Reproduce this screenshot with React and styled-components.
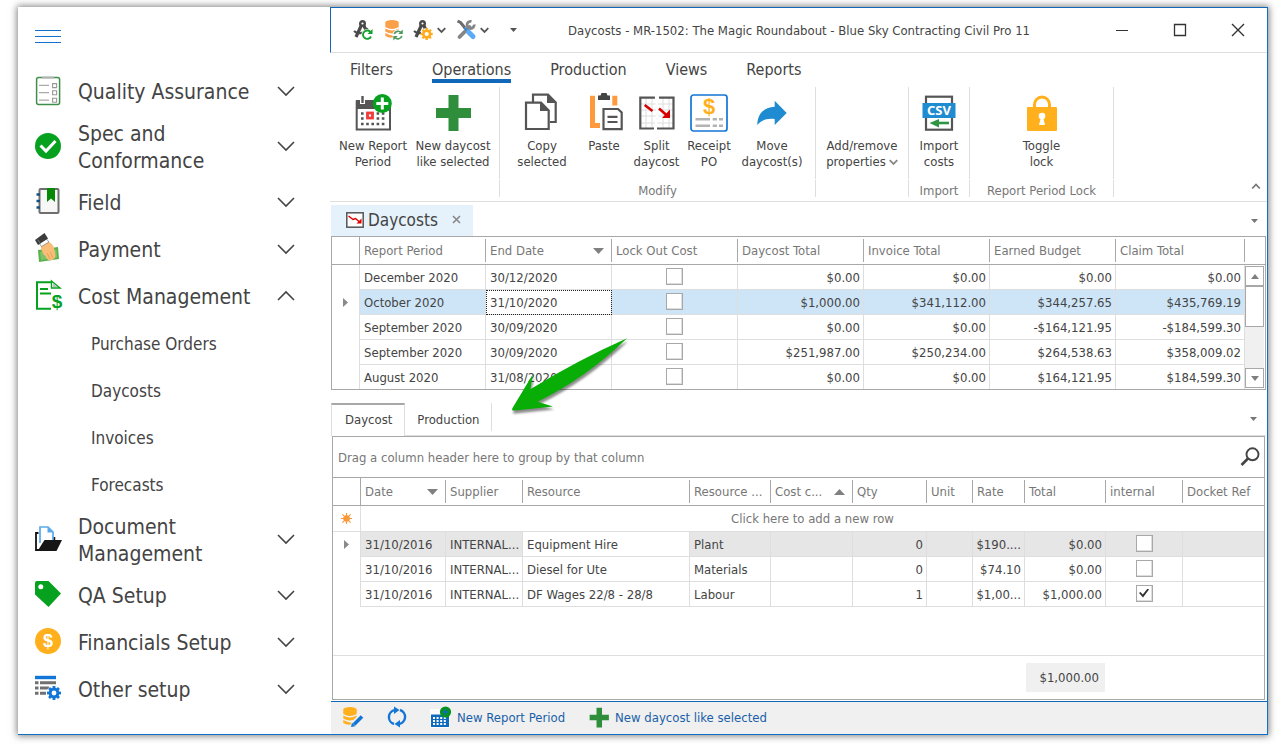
import React from 'react';
import styled, { createGlobalStyle, css } from 'styled-components';

const periods = [
  ['December 2020', '30/12/2020', '$0.00', '$0.00', '$0.00', '$0.00'],
  ['October 2020', '31/10/2020', '$1,000.00', '$341,112.00', '$344,257.65', '$435,769.19'],
  ['September 2020', '30/09/2020', '$0.00', '$0.00', '-$164,121.95', '-$184,599.30'],
  ['September 2020', '30/09/2020', '$251,987.00', '$250,234.00', '$264,538.63', '$358,009.02'],
  ['August 2020', '31/08/2020', '$0.00', '$0.00', '$164,121.95', '$184,599.30'],
];

const costs = [
  { resource: 'Equipment Hire', type: 'Plant', qty: 0, rate: '$190....', total: '$0.00' },
  { resource: 'Diesel for Ute', type: 'Materials', qty: 0, rate: '$74.10', total: '$0.00' },
  { resource: 'DF Wages 22/8 - 28/8', type: 'Labour', qty: 1, rate: '$1,00...', total: '$1,000.00', internal: true },
];

/* ---------- small marks ---------- */

const Chevron = ({ up }) => (
  <svg width="18" height="12" viewBox="0 0 18 12" fill="none" stroke="#444" strokeWidth="1.6">
    <path d={up ? 'M1 10 L9 2 L17 10' : 'M1 2 L9 10 L17 2'} />
  </svg>
);

const SmallChevron = ({ up, color = '#555', size = 9 }) => (
  <svg width={size} height="7" viewBox="0 0 9 7" fill="none" stroke={color} strokeWidth="1.8">
    <path d={up ? 'M.7 5.5 L4.5 1.5 L8.3 5.5' : 'M.7 1.2 L4.5 5 L8.3 1.2'} />
  </svg>
);

const Triangle = ({ up, w = 11, h = 6, color = '#808080' }) => (
  <svg width={w} height={h} viewBox="0 0 10 6" preserveAspectRatio="none" fill={color}>
    <path d={up ? 'M0 6 L5 0 L10 6Z' : 'M0 0 H10 L5 6Z'} />
  </svg>
);

const RowPointer = () => (
  <svg width="5" height="9" viewBox="0 0 5 9" fill="#8a8a8a"><path d="M0 0 L5 4.5 L0 9Z" /></svg>
);

/* ---------- sidebar icons ---------- */

const NavSvg = ({ children }) => <svg width="28" height="30" viewBox="0 0 28 30" fill="none">{children}</svg>;

const ChecklistIcon = () => (
  <NavSvg>
    <rect x="2.6" y="1.6" width="23" height="27" rx="2" fill="#fff" stroke="#3f8f4b" strokeWidth="1.5" />
    <path d="M8 1.6 H20" stroke="#b5b5b5" strokeWidth="2" />
    <path d="M5 9.4 H15 M5 16.6 H15 M5 24.2 H15" stroke="#aaa" strokeWidth="1.3" />
    <path d="M18.6 7.6h4v4h-4z M18.6 14.8h4v4h-4z M18.6 22.2h4v4h-4z" stroke="#999" strokeWidth="1.1" />
  </NavSvg>
);

const ApprovedIcon = () => (
  <NavSvg>
    <circle cx="14" cy="15" r="13" fill="#06a11f" />
    <path d="M6.5 14.5 L12 20 L21.5 10" stroke="#fff" strokeWidth="3" />
  </NavSvg>
);

const NotebookIcon = () => (
  <NavSvg>
    <rect x="5.5" y="2" width="19" height="24" rx="1" fill="#f7f7f7" stroke="#6f6f6f" strokeWidth="2" />
    <path d="M2.5 7.5 H6 M2.5 14 H6 M2.5 20.5 H6" stroke="#16507e" strokeWidth="2.6" />
    <path d="M13 1 H21 V15 L17 11.5 L13 15Z" fill="#068a06" />
  </NavSvg>
);

const PaymentIcon = () => (
  <NavSvg>
    <path d="M4 16 L24 13 L25 25 L5 28Z" fill="#5cb04c" />
    <path d="M6 18 L22.5 15.5 L23 23.5 L7 26Z" fill="#7cc46a" />
    <path d="M7 11 L14 7.5 C18 9 20 12 20.5 16 C21.5 20 22 24 20 24.6 C19 26.5 17 26.5 16.5 25.8 C14.5 27 12.5 25 11.5 22 C8.5 20 6.5 15 7 11Z" fill="#f9bd77" />
    <path d="M13 19 L16 25 M16 18 L19 24" stroke="#e09c50" strokeWidth=".8" />
    <path d="M5 9 L12.5 5 L15 8 L7.5 12.5Z" fill="#fff" stroke="#777" strokeWidth=".7" />
    <path d="M1 6 L10.5 -1 L14 4.5 L4 11Z" fill="#3c3c3c" />
    <path d="M3.5 5.6 L6.5 9.5" stroke="#777" />
  </NavSvg>
);

const CostIcon = () => (
  <NavSvg>
    <path d="M17 1.2 H3 V27.8 H17" stroke="#06a11f" strokeWidth="2" />
    <path d="M17.5 0 L26 7 H17.5Z" fill="#fff" stroke="#06a11f" strokeWidth="1.4" />
    <path d="M19 2.5 L23.5 6 H19Z" fill="#bbb" />
    <path d="M6 8 H14 M6 12.5 H17" stroke="#06a11f" strokeWidth="1.8" />
    <text x="23" y="27" textAnchor="middle" fontFamily="Liberation Sans" fontSize="19" fontWeight="700" fill="#06a11f">$</text>
  </NavSvg>
);

const FolderIcon = () => (
  <NavSvg>
    <path d="M4.5 9 H2 V26 H5" stroke="#111" strokeWidth="1.8" />
    <path d="M6 19 V3 H14 L19 8 V16" stroke="#58a9ec" strokeWidth="1.7" />
    <path d="M13.5 3 V8.5 H19" fill="#58a9ec" />
    <path d="M10.5 16 H28 L22.5 27 H3.5Z" fill="#161616" />
    <path d="M20.5 13 V16.5" stroke="#161616" strokeWidth="1.5" />
  </NavSvg>
);

const TagIcon = () => (
  <NavSvg>
    <path d="M3 1 H14.5 L27 13.5 L14.5 27 L1 14.5 V3 Q1 1 3 1Z" fill="#06a11f" />
    <circle cx="6.8" cy="6.8" r="2.5" fill="#fff" />
  </NavSvg>
);

const CoinIcon = () => (
  <NavSvg>
    <circle cx="14" cy="14" r="13" fill="#ffb01c" />
    <text x="14" y="20" textAnchor="middle" fontFamily="Liberation Sans" fontSize="18" fontWeight="700" fill="#fff">$</text>
  </NavSvg>
);

const Gear = ({ x, y, r, color }) => (
  <g transform={`translate(${x} ${y})`}>
    {[0, 45, 90, 135].map((a) => (
      <rect key={a} x={-r * 0.2} y={-r} width={r * 0.4} height={r * 2} fill={color} transform={`rotate(${a})`} />
    ))}
    <circle r={r * 0.56} fill="none" stroke={color} strokeWidth={r * 0.42} />
    <circle r={r * 0.35} fill="#fff" />
  </g>
);

const SetupIcon = () => (
  <NavSvg>
    <path d="M1 3.5 H22" stroke="#1376d6" strokeWidth="3.4" />
    <path d="M1 8.7 H4.5 M6 8.7 H22 M1 14 H4.5 M6 14 H15 M1 19.3 H4.5 M6 19.3 H12" stroke="#707070" strokeWidth="3" />
    <circle cx="20" cy="19" r="7.5" fill="#fff" />
    <Gear x={20} y={19} r={7} color="#1376d6" />
  </NavSvg>
);

/* ---------- title bar icons ---------- */

const QuickSvg = ({ children }) => <svg width="20" height="22" viewBox="1 0 20 22" fill="none">{children}</svg>;

const Compass = () => (
  <>
    <circle cx="10.5" cy="4.5" r="2.3" stroke="#4a4a4a" strokeWidth="2.4" />
    <path d="M9.5 6 L4 18 M11.5 6 L17 17" stroke="#4a4a4a" strokeWidth="3.2" />
    <path d="M2 12 C6 15.5 12 15 16 9.5" stroke="#4a4a4a" strokeWidth="2.2" />
  </>
);

const CompassRefresh = () => (
  <QuickSvg>
    <Compass />
    <circle cx="15" cy="15.5" r="5.6" fill="#fff" />
    <path d="M18.8 13.5 A4.2 4.2 0 1 0 19 17.5" stroke="#14a02c" strokeWidth="1.9" />
    <path d="M20.5 10 V15 H15.5Z" fill="#14a02c" />
  </QuickSvg>
);

const Cylinder = ({ color }) => (
  <g>
    <ellipse cx="8" cy="3.6" rx="6.7" ry="2.6" fill={color} />
    <path d="M1.3 4 H14.7 V8 Q8 12 1.3 8Z M1.3 9.5 Q8 13.5 14.7 9.5 V12.5 Q8 16.5 1.3 12.5Z M1.3 14 Q8 18 12 15.5 V17.5 Q6 20 1.3 17Z" fill={color} />
  </g>
);

const DataRefresh = () => (
  <QuickSvg>
    <g transform="translate(2 0)">
      <Cylinder color="#f9a049" />
      <circle cx="14" cy="16" r="5.5" fill="#fff" />
      <path d="M10.3 15 A4 4 0 0 1 17 13.5 M17.8 17 A4 4 0 0 1 11 18.5" stroke="#4b9b60" strokeWidth="1.7" />
      <path d="M18.8 10.5 V15 H14.3Z M9.3 21.5 V17 H13.8Z" fill="#4b9b60" />
    </g>
  </QuickSvg>
);

const CompassGear = () => (
  <QuickSvg>
    <Compass />
    <circle cx="14.7" cy="15" r="6" fill="#fff" />
    <Gear x={14.7} y={15} r={6} color="#ffac1c" />
  </QuickSvg>
);

const ToolsIcon = () => (
  <QuickSvg>
    <path d="M4.5 18 L14.5 8" stroke="#858585" strokeWidth="3.8" strokeLinecap="round" />
    <path d="M16.5 2.4 A3.6 3.6 0 1 0 19.2 5.5" stroke="#858585" strokeWidth="2.8" />
    <path d="M2.5 2 L5.5 3.5 L10 9" stroke="#6c6c6c" strokeWidth="3" />
    <path d="M9 8.5 L13 12.5" stroke="#2f86d6" strokeWidth="2" />
    <path d="M13.5 13 L18 17.5" stroke="#5aaaf5" strokeWidth="5" strokeLinecap="round" />
  </QuickSvg>
);

/* ---------- ribbon icons ---------- */

const BigSvg = ({ children }) => <svg width="40" height="40" viewBox="0 0 40 40" fill="none">{children}</svg>;

const NewPeriodIcon = () => (
  <BigSvg>
    <rect x="3.7" y="9.5" width="33.3" height="28" fill="#fff" stroke="#555" strokeWidth="2" />
    <path d="M3 8 H37 V17 H3Z" fill="#555" />
    <path d="M9.5 3.5 V12" stroke="#fff" strokeWidth="5" />
    <path d="M9.5 4 V11" stroke="#555" strokeWidth="2.4" />
    <path d="M8 21.5 H34 M8 26.5 H34 M8 32 H34" stroke="#555" strokeWidth="2.6" strokeDasharray="2.6 2.6" />
    <rect x="12" y="18.5" width="10" height="10" fill="#fff" />
    <rect x="14.5" y="21" width="5" height="5" stroke="#f13a3a" strokeWidth="2.8" />
    <circle cx="29.3" cy="11.5" r="9.5" fill="#06a11f" />
    <path d="M29.3 5.5 V17.5 M23.3 11.5 H35.3" stroke="#fff" strokeWidth="3" />
  </BigSvg>
);

const PlusIcon = ({ size = 40 }) => (
  <svg width={size} height={size} viewBox="0 0 40 40"><path d="M15.5 3 H25.5 V16 H38 V26 H25.5 V39 H15.5 V26 H3 V16 H15.5Z" fill="#2f8e3b" /></svg>
);

const CopyIcon = () => (
  <BigSvg>
    <path d="M11 10 V2.7 H26 L33.7 10.5 V30 H28" stroke="#555" strokeWidth="2.2" />
    <path d="M25 2 V11 H34Z" fill="#555" />
    <path d="M4 10.7 H19 L26.7 18.5 V37 H4Z" fill="#fff" stroke="#555" strokeWidth="2.2" />
    <path d="M18 10 V19 H27Z" fill="#555" />
  </BigSvg>
);

const PasteIcon = () => (
  <BigSvg>
    <path d="M6 3.7 H11 V31 H16 V36 H6Z M28.3 3.7 H33.3 V13.5 H28.3Z" fill="#ff9a3c" />
    <path d="M14 8 V3.5 H16.5 L17.5 1 H22.5 L23.5 3.5 H26 V8Z" fill="#444" />
    <path d="M19.5 17 H34 L37.7 20.5 V37.2 H19.5Z" fill="#fff" stroke="#555" strokeWidth="2.2" />
    <path d="M23.5 24.8 H33.5 M23.5 30 H33.5" stroke="#555" strokeWidth="2.2" />
  </BigSvg>
);

const SplitIcon = () => (
  <BigSvg>
    <path d="M9 5 V37 M15 5 V37 M26 5 V37 M32 5 V37 M3 12 H37 M3 18 H37 M3 24 H37 M3 31 H37" stroke="#ddd" />
    <path d="M18 5.7 H3.3 V36.5 H17 M22 5.7 H36.5 V36.5 H20" stroke="#555" strokeWidth="2.2" />
    <path d="M19 3 L20.5 20 L18 39" stroke="#fff" strokeWidth="2.6" />
    <path d="M7.7 13 L15.5 19 M22 16.5 L30 23.5" stroke="#d60000" strokeWidth="2.6" />
    <path d="M33 17.5 V26 H25Z" fill="#d60000" />
  </BigSvg>
);

const ReceiptIcon = () => (
  <BigSvg>
    <rect x="2" y="3" width="36" height="36" rx="2.5" fill="#fff" stroke="#1376d6" strokeWidth="1.7" />
    <text x="20" y="22" textAnchor="middle" fontFamily="Liberation Sans" fontSize="22" fontWeight="700" fill="#ffb01c">$</text>
    <path d="M6.5 27.3 H21 M23.7 27.3 H28 M30 27.3 H34 M6.5 33.7 H21 M23.7 33.7 H28 M30 33.7 H34" stroke="#b3b3b3" strokeWidth="2.6" />
  </BigSvg>
);

const MoveIcon = () => (
  <BigSvg>
    <path d="M5.3 33 C5.5 22 12 15 22.7 14.7 V8.7 L34.7 21 L22.7 33 V27 C15 26 9.5 28 5.3 33Z" fill="#1f8bd0" />
  </BigSvg>
);

const CsvIcon = () => (
  <BigSvg>
    <rect x="7" y="4.7" width="26" height="33" fill="#fff" stroke="#555" strokeWidth="2.2" />
    <rect x="3.5" y="11" width="33" height="15" fill="#1f8bd0" />
    <text x="20" y="23" textAnchor="middle" fontFamily="Noto Sans" fontSize="13" fontWeight="700" fill="#fff">CSV</text>
    <path d="M18 31 H30" stroke="#2f9444" strokeWidth="2.6" />
    <path d="M10.5 31 L20 27 V35.5Z" fill="#2f9444" />
  </BigSvg>
);

const LockIcon = () => (
  <svg width="40" height="40" viewBox="1 0 40 40" fill="none">
    <path d="M13.5 16 V12.5 A7.5 7.5 0 0 1 28.5 12.5 V16" stroke="#ffb01c" strokeWidth="3" />
    <rect x="6" y="15" width="30" height="24" rx="1" fill="#ffb01c" />
    <circle cx="21" cy="24" r="3.3" fill="#fff" />
    <path d="M20 25 H22 L24 33 H18Z" fill="#fff" />
  </svg>
);

/* ---------- other icons ---------- */

const ChartIcon = () => (
  <svg width="18" height="16" viewBox="0 0 18 16" fill="none">
    <rect x=".8" y=".8" width="16.4" height="14.4" fill="#fdfdfd" stroke="#555" strokeWidth="1.5" />
    <path d="M2.5 4 L7 7.5 L9.5 6.5 L13 9.5" stroke="#e00000" strokeWidth="1.5" />
    <path d="M15.5 6.5 V11.5 H10.5Z" fill="#e00000" />
  </svg>
);

const SearchIcon = () => (
  <svg width="20" height="20" viewBox="0 0 20 20" fill="none" stroke="#444">
    <circle cx="12.5" cy="7.3" r="6" strokeWidth="1.9" />
    <path d="M8 11.5 L1.5 18" strokeWidth="2.6" />
  </svg>
);

const DataEdit = () => (
  <svg width="22" height="22" viewBox="0 0 22 22" fill="none">
    <Cylinder color="#ffb01c" />
    <path d="M11 19.5 L19.5 11" stroke="#f0f0f0" strokeWidth="7" />
    <path d="M12 18.5 L20 10.5" stroke="#1376d6" strokeWidth="3.6" />
    <path d="M10 16.8 L13.3 20.2 L9 21Z" fill="#1376d6" />
  </svg>
);

const RefreshIcon = () => (
  <svg width="20" height="22" viewBox="0 0 20 22" fill="none">
    <path d="M7 18 A7.2 7.2 0 0 1 8 4 M13 4 A7.2 7.2 0 0 1 12 18" stroke="#1376d6" strokeWidth="2.4" />
    <path d="M7 .5 L12.5 4 L7 8Z M13 14 V21.5 L7.5 18Z" fill="#1376d6" />
  </svg>
);

const PeriodSmallIcon = () => (
  <svg width="22" height="22" viewBox="0 0 22 22" fill="none">
    <path d="M0 3 H20 V22 H0Z" fill="#fff" />
    <path d="M1 8.5 H19 V21 H1Z" fill="#0f6cbd" />
    <path d="M3 12 H17 M3 15 H17 M3 18 H17" stroke="#fff" strokeWidth="1.8" strokeDasharray="2 1.6" />
    <circle cx="15.5" cy="6" r="5.6" fill="#06921f" />
    <path d="M15.5 3 V9 M12.5 6 H18.5" stroke="#0f6cbd" strokeWidth="1.5" />
  </svg>
);

const NewRowIcon = () => (
  <svg width="11" height="11" viewBox="0 0 12 12" stroke="#f9983a" strokeWidth="1.2">
    <path d="M6 0 V12 M0 6 H12 M1.5 1.5 L10.5 10.5 M10.5 1.5 L1.5 10.5" />
    <circle cx="6" cy="6" r="3" fill="#f9983a" />
  </svg>
);

const PointerArrow = () => (
  <ArrowSvg width="122" height="84" viewBox="0 0 122 84" aria-hidden="true">
    <path d="M117 1.3 Q68 23 20.3 52.3 L23 37 L2.5 71 Q1 74 5 73.5 L43 69.5 L27.7 64.7 Q76 41 117 1.3Z" fill="#08ae05" />
  </ArrowSvg>
);

const nav = [
  { label: 'Quality Assurance', icon: <ChecklistIcon /> },
  { label: 'Spec and Conformance', icon: <ApprovedIcon />, tall: true },
  { label: 'Field', icon: <NotebookIcon /> },
  { label: 'Payment', icon: <PaymentIcon /> },
  { label: 'Cost Management', icon: <CostIcon />, items: ['Purchase Orders', 'Daycosts', 'Invoices', 'Forecasts'] },
  { label: 'Document Management', icon: <FolderIcon />, tall: true },
  { label: 'QA Setup', icon: <TagIcon /> },
  { label: 'Financials Setup', icon: <CoinIcon /> },
  { label: 'Other setup', icon: <SetupIcon /> },
];

const Sidebar = () => (
  <SidebarWrap>
    <MenuButton aria-label="Menu"><span /><span /><span /></MenuButton>
    {nav.map((item) => (
      <React.Fragment key={item.label}>
        <NavButton $tall={item.tall} aria-expanded={!!item.items}>
          {item.icon}
          <span>{item.label}</span>
          <Chevron up={!!item.items} />
        </NavButton>
        {item.items && item.items.map((sub) => <SubLink key={sub} href="#">{sub}</SubLink>)}
      </React.Fragment>
    ))}
  </SidebarWrap>
);

const RibbonItem = ({ icon, lines, width, menu }) => (
  <RibbonButton $width={width}>
    <IconSlot>{icon}</IconSlot>
    <span>{lines[0]}</span>
    {lines[1] && <span>{lines[1]}{menu && <SmallChevron color="#888" />}</span>}
  </RibbonButton>
);

const Ribbon = () => (
  <RibbonWrap>
    <RibbonGroup>
      <GroupItems>
        <RibbonItem icon={<NewPeriodIcon />} lines={['New Report', 'Period']} width={82} />
        <RibbonItem icon={<PlusIcon />} lines={['New daycost', 'like selected']} width={78} />
      </GroupItems>
      <GroupLabel />
    </RibbonGroup>
    <RibbonGroup>
      <GroupItems>
        <RibbonItem icon={<CopyIcon />} lines={['Copy', 'selected']} width={70} />
        <RibbonItem icon={<PasteIcon />} lines={['Paste']} width={54} />
        <RibbonItem icon={<SplitIcon />} lines={['Split', 'daycost']} width={51} />
        <RibbonItem icon={<ReceiptIcon />} lines={['Receipt', 'PO']} width={54} />
        <RibbonItem icon={<MoveIcon />} lines={['Move', 'daycost(s)']} width={72} />
      </GroupItems>
      <GroupLabel>Modify</GroupLabel>
    </RibbonGroup>
    <RibbonGroup>
      <GroupItems>
        <RibbonItem lines={['Add/remove', 'properties']} width={78} menu />
      </GroupItems>
      <GroupLabel />
    </RibbonGroup>
    <RibbonGroup>
      <GroupItems>
        <RibbonItem icon={<CsvIcon />} lines={['Import', 'costs']} width={46} />
      </GroupItems>
      <GroupLabel>Import</GroupLabel>
    </RibbonGroup>
    <RibbonGroup>
      <GroupItems>
        <RibbonItem icon={<LockIcon />} lines={['Toggle', 'lock']} width={129} />
      </GroupItems>
      <GroupLabel>Report Period Lock</GroupLabel>
    </RibbonGroup>
    <CollapseButton aria-label="Collapse ribbon"><SmallChevron up color="#777" size={12} /></CollapseButton>
  </RibbonWrap>
);

const PeriodTable = () => (
  <Grid>
    <colgroup>
      <Col $w={28} />
      <Col $w={126} /><Col $w={126} /><Col $w={126} /><Col $w={126} /><Col $w={126} /><Col $w={126} />
      <col />
      <Col $w={20} />
    </colgroup>
    <thead>
      <tr>
        <Th $full />
        <Th><HeadCell>Report Period</HeadCell></Th>
        <Th><HeadCell>End Date<Triangle /></HeadCell></Th>
        <Th><HeadCell>Lock Out Cost</HeadCell></Th>
        <Th><HeadCell>Daycost Total</HeadCell></Th>
        <Th><HeadCell>Invoice Total</HeadCell></Th>
        <Th><HeadCell>Earned Budget</HeadCell></Th>
        <Th><HeadCell>Claim Total</HeadCell></Th>
        <Th />
      </tr>
    </thead>
    <tbody>
      {periods.map(([name, end, ...totals], i) => {
        const last = i === periods.length - 1;
        return (
          <Tr key={i} $bg={i === 1 && '#cde5f7'}>
            <Marker>{i === 1 && <RowPointer />}</Marker>
            <Td $last={last}>{name}</Td>
            <Td $last={last}>{end}</Td>
            <Td $last={last} $align="center"><Check type="checkbox" aria-label={`Lock out cost, ${name}`} /></Td>
            {totals.map((t, n) => <Td key={n} $last={last} $align="right">{t}</Td>)}
            {i === 0 && (
              <ScrollCell rowSpan={5}>
                <ScrollBar>
                  <ScrollButton aria-label="Scroll up"><Triangle up w={8} h={5} /></ScrollButton>
                  <ScrollThumb />
                  <ScrollButton aria-label="Scroll down"><Triangle w={8} h={5} /></ScrollButton>
                </ScrollBar>
              </ScrollCell>
            )}
          </Tr>
        );
      })}
    </tbody>
  </Grid>
);

const CostTable = () => (
  <Grid $inner>
    <colgroup>
      <Col $w={28} /><Col $w={85} /><Col $w={77} /><Col $w={167} /><Col $w={81} /><Col $w={82} />
      <Col $w={74} /><Col $w={46} /><Col $w={52} /><Col $w={81} /><Col $w={77} />
      <col />
    </colgroup>
    <thead>
      <tr>
        <Th $full />
        <Th><HeadCell>Date<Triangle /></HeadCell></Th>
        <Th><HeadCell>Supplier</HeadCell></Th>
        <Th><HeadCell>Resource</HeadCell></Th>
        <Th><HeadCell>Resource ...</HeadCell></Th>
        <Th><HeadCell>Cost c...<Triangle up /></HeadCell></Th>
        <Th><HeadCell>Qty</HeadCell></Th>
        <Th><HeadCell>Unit</HeadCell></Th>
        <Th><HeadCell>Rate</HeadCell></Th>
        <Th><HeadCell>Total</HeadCell></Th>
        <Th><HeadCell>internal</HeadCell></Th>
        <Th><HeadCell>Docket Ref</HeadCell></Th>
      </tr>
    </thead>
    <tbody>
      <tr>
        <Marker $line><NewRowIcon /></Marker>
        <NewRow colSpan={11}>Click here to add a new row</NewRow>
      </tr>
      {costs.map((c, i) => (
        <Tr key={c.resource} $bg={i === 0 && '#e6e6e6'}>
          <Marker>{i === 0 && <RowPointer />}</Marker>
          <Td>31/10/2016</Td>
          <Td>INTERNAL...</Td>
          <Td>{c.resource}</Td>
          <Td>{c.type}</Td>
          <Td />
          <Td $align="right">{c.qty}</Td>
          <Td />
          <Td $align="right">{c.rate}</Td>
          <Td $align="right">{c.total}</Td>
          <Td $align="center"><Check type="checkbox" defaultChecked={c.internal} aria-label={`Internal, ${c.resource}`} /></Td>
          <Td $edge />
        </Tr>
      ))}
    </tbody>
  </Grid>
);

const App = () => {
  return (
    <Page>
      <GlobalStyle />
      <Window>
        <Sidebar />
        <Main>
          <TitleBar>
            <QuickTools>
              <PlainButton aria-label="Refresh design"><CompassRefresh /></PlainButton>
              <PlainButton aria-label="Refresh data"><DataRefresh /></PlainButton>
              <PlainButton aria-label="Design settings"><CompassGear /><SmallChevron /></PlainButton>
              <PlainButton aria-label="Tools"><ToolsIcon /><SmallChevron /></PlainButton>
              <MoreButton aria-label="More"><Triangle w={7} h={4} color="#555" /></MoreButton>
            </QuickTools>
            <Title>Daycosts - MR-1502: The Magic Roundabout - Blue Sky Contracting Civil Pro 11</Title>
            <WindowButtons>
              <PlainButton aria-label="Minimise"><svg width="14" height="14" stroke="#333" fill="none"><path d="M1 7.5 H13" /></svg></PlainButton>
              <PlainButton aria-label="Maximise"><svg width="14" height="14" stroke="#333" fill="none"><path d="M1.5 1.5 H12.5 V12.5 H1.5Z" strokeWidth="1.3" /></svg></PlainButton>
              <PlainButton aria-label="Close"><svg width="14" height="14" stroke="#333" fill="none"><path d="M1 1 L13 13 M13 1 L1 13" strokeWidth="1.4" /></svg></PlainButton>
            </WindowButtons>
          </TitleBar>
          <MenuTabs>
            {['Filters', 'Operations', 'Production', 'Views', 'Reports'].map((t) => (
              <MenuTab key={t} $active={t === 'Operations'}>{t}</MenuTab>
            ))}
          </MenuTabs>
          <Ribbon />
          <Workspace>
            <DocTabs>
              <DocTab>
                <ChartIcon />
                <span>Daycosts</span>
                <PlainButton aria-label="Close Daycosts">
                  <svg width="9" height="9" stroke="#888" strokeWidth="1.6"><path d="M1 1 L8 8 M8 1 L1 8" /></svg>
                </PlainButton>
              </DocTab>
              <PlainButton aria-label="Open documents"><Triangle w={7} h={4} color="#777" /></PlainButton>
            </DocTabs>
            <PeriodTable />
            <DetailTabs>
              <DetailTab $active>Daycost</DetailTab>
              <DetailTab>Production</DetailTab>
              <PlainButton aria-label="Open tabs"><Triangle w={7} h={4} color="#777" /></PlainButton>
            </DetailTabs>
            <DetailPanel>
              <GroupBar>
                Drag a column header here to group by that column
                <PlainButton aria-label="Search"><SearchIcon /></PlainButton>
              </GroupBar>
              <CostTable />
              <TotalBar>
                <TotalBox>$1,000.00</TotalBox>
              </TotalBar>
            </DetailPanel>
            <PointerArrow />
          </Workspace>
          <StatusBar>
            <PlainButton aria-label="Edit data"><DataEdit /></PlainButton>
            <PlainButton aria-label="Refresh"><RefreshIcon /></PlainButton>
            <StatusButton><PeriodSmallIcon />New Report Period</StatusButton>
            <StatusButton><PlusIcon size={22} />New daycost like selected</StatusButton>
          </StatusBar>
        </Main>
      </Window>
    </Page>
  );
};

const GlobalStyle = createGlobalStyle`
  * { box-sizing: border-box; }

  body {
    margin: 0;
    background: #fff;
  }

  body, button, input {
    font-family: Tahoma, 'DejaVu Sans Condensed', 'Noto Sans', sans-serif;
    font-size: 13px;
    color: #444;
  }

  button {
    padding: 0;
    border: 0;
    background: none;
    cursor: pointer;
  }

  svg {
    display: block;
    flex: none;
    overflow: visible;
  }
`;

const Page = styled.div`
  min-height: 100vh;
  padding: 7px 15px 10px 18px;
  display: flex;
`;

const Window = styled.div`
  flex: 1;
  min-width: 0;
  display: flex;
  background: #fff;
  border-bottom: 1px solid #1070c4;
  box-shadow: 0 0 7px 1px rgba(0, 0, 0, 0.5);
`;

const SidebarWrap = styled.nav`
  width: 312px;
  flex: none;
  display: flex;
  flex-direction: column;
`;

const MenuButton = styled.button`
  width: 26px;
  height: 13px;
  margin: 23px 17px 24px;
  display: flex;
  flex-direction: column;
  justify-content: space-between;

  span {
    width: 100%;
    height: 1px;
    background: #1273c8;
  }
`;

const NavButton = styled.button`
  height: ${(p) => (p.$tall ? 64 : 47)}px;
  padding: 0 35px 0 16px;
  display: flex;
  align-items: center;
  gap: 16px;
  font-size: 21px;
  line-height: 27px;
  text-align: left;

  span {
    flex: 1;
    padding-top: 3px;
  }
`;

const SubLink = styled.a`
  height: 47px;
  padding-left: 73px;
  font-size: 17px;
  line-height: 50px;
  color: #444;
  text-decoration: none;
`;

const Main = styled.main`
  flex: 1;
  min-width: 0;
  display: flex;
  flex-direction: column;
  border-top: 1px solid #1268b8;
  border-right: 1px solid #1070c4;
`;

const PlainButton = styled.button`
  display: flex;
  align-items: center;
  gap: 4px;
`;

const MoreButton = styled(PlainButton)`
  width: 28px;
  justify-content: center;
`;

const TitleBar = styled.header`
  height: 45px;
  display: grid;
  grid-template-columns: 1fr auto 1fr;
  align-items: center;
  border-left: 1px solid #1268b8;
  border-bottom: 1px solid #dedede;
`;

const QuickTools = styled.div`
  padding-left: 22px;
  display: flex;
  gap: 10px;
`;

const Title = styled.h1`
  margin: 0;
  font-size: 13px;
  font-weight: 400;
  white-space: nowrap;
`;

const WindowButtons = styled.div`
  padding-right: 22px;
  display: flex;
  justify-content: flex-end;
  gap: 44px;
`;

const MenuTabs = styled.div`
  height: 34px;
  padding: 6px 20px 0;
  display: flex;
  align-items: flex-start;
  gap: 39px;
`;

const MenuTab = styled.button`
  height: 24px;
  padding-top: 1px;
  font-size: 16px;
  line-height: 19px;
  border-bottom: 4px solid ${(p) => (p.$active ? '#1268b8' : 'transparent')};
`;

const RibbonWrap = styled.div`
  height: 115px;
  padding-left: 1px;
  display: flex;
  border-bottom: 1px solid #dedede;
`;

const RibbonGroup = styled.div`
  display: flex;
  flex-direction: column;
`;

const GroupItems = styled.div`
  height: 92px;
  padding: 5px 7px 0;
  display: flex;
  border-right: 1px solid #dedede;

  ${RibbonGroup}:first-child & {
    padding-left: 1px;
  }
`;

const RibbonButton = styled.button`
  width: ${(p) => p.$width}px;
  display: flex;
  flex-direction: column;
  align-items: center;
  line-height: 16px;
  white-space: nowrap;

  span {
    display: flex;
    align-items: center;
    gap: 3px;
  }
`;

const IconSlot = styled.div`
  width: 40px;
  height: 46px;
`;

const GroupLabel = styled.div`
  height: 17px;
  margin-top: 1px;
  border-right: 1px solid #dedede;
  text-align: center;
  line-height: 22px;
  color: #777;
`;

const CollapseButton = styled.button`
  align-self: flex-end;
  margin: 0 5px 11px auto;
`;

const Workspace = styled.div`
  position: relative;
  flex: 1;
  padding: 3px 1px 0 1px;
  display: flex;
  flex-direction: column;
`;

const DocTabs = styled.div`
  height: 31px;
  padding-right: 8px;
  display: flex;
  align-items: center;
  justify-content: space-between;
`;

const DocTab = styled.div`
  height: 31px;
  width: 142px;
  padding: 0 12px 2px 15px;
  display: flex;
  align-items: center;
  gap: 4px;
  font-size: 17px;
  background: #e5f2fb;

  span {
    flex: 1;
  }
`;

const Grid = styled.table`
  width: 100%;
  table-layout: fixed;
  border-collapse: separate;
  border-spacing: 0;
  border: ${(p) => (p.$inner ? '0' : '1px solid #a8a8a8')};
`;

const Col = styled.col`
  width: ${(p) => p.$w}px;
`;

const Th = styled.th`
  height: 28px;
  padding: ${(p) => (p.$full ? '0' : '2px 0')};
  border-bottom: 1px solid #a8a8a8;
  border-right: ${(p) => (p.$full ? '1px solid #a8a8a8' : '0')};
  font-weight: 400;
  color: #777;
`;

const HeadCell = styled.div`
  height: 23px;
  padding: 0 7px 0 4px;
  display: flex;
  align-items: center;
  justify-content: space-between;
  white-space: nowrap;
  border-right: 1px solid #a8a8a8;

  ${Th}:last-child & {
    border-right: 0;
  }
`;

const Td = styled.td`
  height: ${(p) => (p.$last ? 24 : 25)}px;
  padding: 0 ${(p) => (p.$align === 'right' ? 3 : 0)}px 0 ${(p) => (p.$align ? 0 : 4)}px;
  white-space: nowrap;
  text-align: ${(p) => p.$align || 'left'};
  border-right: ${(p) => (p.$edge ? '0' : '1px solid #dedede')};
  border-bottom: ${(p) => (p.$last ? '0' : '1px solid #dedede')};
`;

const Tr = styled.tr`
  ${Td} {
    background: ${(p) => p.$bg || '#fff'};

    ${(p) => p.$bg === '#cde5f7' && css`
      &:nth-child(3) {
        background: #fff;
        outline: 1px dotted #222;
        outline-offset: -1px;
      }
    `}

    ${(p) => p.$bg === '#e6e6e6' && css`
      &:nth-child(4) {
        background: #fff;
      }
    `}
  }
`;

const Marker = styled.td`
  padding: 0;
  border-right: 1px solid #dedede;
  border-bottom: ${(p) => (p.$line ? '1px solid #dedede' : '0')};

  svg {
    margin: 0 auto;
  }
`;

const NewRow = styled.td`
  height: 26px;
  padding: 0;
  text-align: center;
  color: #777;
  border-bottom: 1px solid #dedede;
`;

const Check = styled.input`
  appearance: none;
  display: grid;
  place-items: center;
  width: 17px;
  height: 17px;
  margin: 0 auto 2px;
  background: #fff;
  border: 1px solid #a8a8a8;
  box-shadow: inset -1px -1px #ddd;

  &:checked::after {
    content: '';
    width: 10px;
    height: 9px;
    background: #333;
    clip-path: polygon(0 50%, 14% 38%, 38% 66%, 86% 0, 100% 12%, 40% 100%);
  }
`;

const ScrollCell = styled.td`
  padding: 1px 1px 0 0;
  vertical-align: top;
`;

const ScrollBar = styled.div`
  height: 122px;
  display: grid;
  grid-template-rows: 20px 41px 1fr;
  background: #f0f0f0;

  > :last-child {
    align-self: end;
  }
`;

const ScrollButton = styled.button`
  height: 20px;
  display: flex;
  align-items: center;
  justify-content: center;
  background: #fff;
  border: 1px solid #a8a8a8;
`;

const ScrollThumb = styled.div`
  background: #fff;
  border: 1px solid #a8a8a8;
`;

const DetailTabs = styled.div`
  height: 33px;
  margin-top: 13px;
  padding-right: 9px;
  display: flex;
  border-bottom: 1px solid #dedede;

  > :last-child {
    margin-left: auto;
  }
`;

const DetailTab = styled.button`
  height: ${(p) => (p.$active ? 33 : 28)}px;
  padding: 4px 11px 0 12px;
  border-right: 1px solid #dedede;
  ${(p) => p.$active && css`
    padding: 0 12px 3px 13px;
    background: #fff;
    border-left: 1px solid #dedede;
    border-top: 2px solid #a8a8a8;
  `}
`;

const DetailPanel = styled.section`
  flex: 1;
  margin: 0 1px 1px;
  display: flex;
  flex-direction: column;
  border: 1px solid #a8a8a8;
`;

const GroupBar = styled.div`
  height: 41px;
  padding: 0 4px 0 5px;
  display: flex;
  align-items: center;
  justify-content: space-between;
  border-bottom: 1px solid #a8a8a8;
  color: #777;
`;

const TotalBar = styled.div`
  height: 44px;
  margin-top: auto;
  padding-right: 159px;
  display: flex;
  align-items: center;
  justify-content: flex-end;
  border-top: 1px solid #dedede;
`;

const TotalBox = styled.div`
  width: 79px;
  height: 29px;
  padding-right: 6px;
  text-align: right;
  line-height: 29px;
  background: #f0f0f0;
`;

const StatusBar = styled.footer`
  height: 33px;
  margin-left: 1px;
  padding: 0 11px 2px;
  display: flex;
  align-items: center;
  gap: 23px;
  background: #f0f0f0;
  border-top: 1px solid #1268b8;
`;

const StatusButton = styled.button`
  display: flex;
  align-items: center;
  gap: 5px;
  color: #1a5fa8;
`;

const ArrowSvg = styled.svg`
  position: absolute;
  left: 180px;
  top: 135px;
  filter: drop-shadow(1px 3px 1px rgba(0, 0, 0, 0.45));
  pointer-events: none;
`;

export default App;
